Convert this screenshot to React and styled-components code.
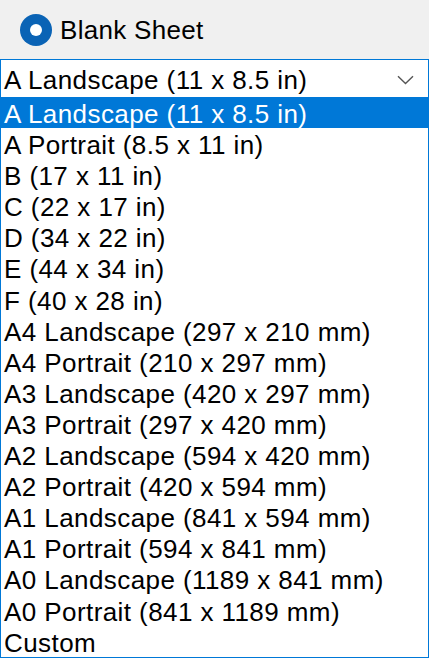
import React, { useState } from "react";
import styled, { createGlobalStyle } from "styled-components";

const Global = createGlobalStyle`
  html, body {
    margin: 0;
    padding: 0;
    background: #f0f0f0;
  }
  body {
    font-family: "Liberation Sans", Arial, sans-serif;
  }
`;

const sizes = [
  "A Landscape (11 x 8.5 in)",
  "A Portrait (8.5 x 11 in)",
  "B (17 x 11 in)",
  "C (22 x 17 in)",
  "D (34 x 22 in)",
  "E (44 x 34 in)",
  "F (40 x 28 in)",
  "A4 Landscape (297 x 210 mm)",
  "A4 Portrait (210 x 297 mm)",
  "A3 Landscape (420 x 297 mm)",
  "A3 Portrait (297 x 420 mm)",
  "A2 Landscape (594 x 420 mm)",
  "A2 Portrait (420 x 594 mm)",
  "A1 Landscape (841 x 594 mm)",
  "A1 Portrait (594 x 841 mm)",
  "A0 Landscape (1189 x 841 mm)",
  "A0 Portrait (841 x 1189 mm)",
  "Custom",
];

const Panel = styled.div`
  width: 429px;
  display: flex;
  flex-direction: column;
  font-size: 26px;
  letter-spacing: 0.42px;
  color: #000;
`;

const RadioRow = styled.label`
  height: 59px;
  display: flex;
  align-items: center;
  gap: 8px;
  padding: 1px 0 0 20px;
  box-sizing: border-box;
`;

const RadioMark = styled.span`
  width: 32px;
  height: 32px;
  border-radius: 50%;
  background: #0a63b5;
  display: flex;
  align-items: center;
  justify-content: center;
  flex: none;
  &::after {
    content: "";
    width: 12px;
    height: 12px;
    border-radius: 50%;
    background: #fff;
  }
`;

const RadioText = styled.span`
  line-height: 30px;
  letter-spacing: 0.3px;
`;

const Combo = styled.div`
  height: 38px;
  box-sizing: border-box;
  border: 1px solid #0078d7;
  border-bottom: none;
  background: #fff;
  display: flex;
  align-items: center;
  padding: 2px 14px 0 3px;
`;

const ComboValue = styled.span`
  flex: 1;
  line-height: 30px;
  white-space: nowrap;
`;

const List = styled.ul`
  list-style: none;
  margin: 0;
  padding: 0;
  background: #fff;
  border: 1px solid #0078d7;
  border-top: none;
`;

const Option = styled.li`
  height: 31.1px;
  box-sizing: border-box;
  padding: 4px 0 0 3px;
  line-height: 27px;
  white-space: nowrap;
  background: ${(p) => (p.$active ? "#0078d7" : "#fff")};
  color: ${(p) => (p.$active ? "#fff" : "#000")};
`;

const Chevron = () => (
  <svg width="17" height="10" viewBox="0 0 17 10" fill="none">
    <path d="M1 1.2 L8.5 8.5 L16 1.2" stroke="#555" strokeWidth="1.4" />
  </svg>
);

export default function App() {
  const [selected] = useState(0);
  return (
    <>
      <Global />
      <Panel>
        <RadioRow>
          <RadioMark />
          <RadioText>Blank Sheet</RadioText>
        </RadioRow>
        <Combo>
          <ComboValue>{sizes[selected]}</ComboValue>
          <Chevron />
        </Combo>
        <List>
          {sizes.map((s, i) => (
            <Option key={s} $active={i === selected}>
              {s}
            </Option>
          ))}
        </List>
      </Panel>
    </>
  );
}
